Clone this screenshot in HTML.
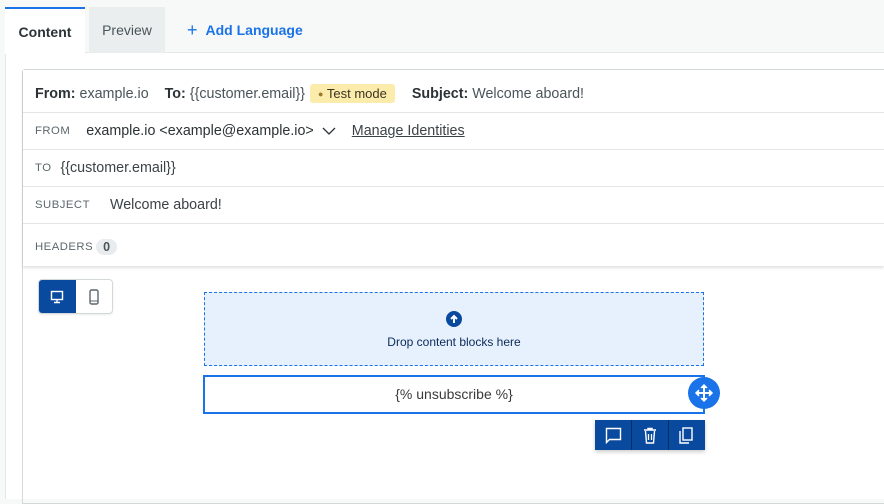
<!DOCTYPE html>
<html><head><meta charset="utf-8"><style>
*{box-sizing:border-box;margin:0;padding:0}
body{width:884px;height:494px;overflow:hidden;background:#f7f8f8;font-family:"Liberation Sans",sans-serif;color:#2b3336;position:relative;font-size:14.3px}
.abs{position:absolute}
.tab{position:absolute;top:7px;height:46px;line-height:46px;text-align:center;font-size:14px}
.row{position:absolute;left:23px;right:0;border-bottom:1px solid #e3e7e8;display:flex;align-items:center}
.lbl{font-size:11.3px;color:#5c676b;letter-spacing:.5px}
</style></head><body>
<div class="abs" style="left:5px;top:52px;right:0;bottom:-5px;background:#fff;border-left:1px solid #e3e8e9;border-top:1px solid #e3e7e8"></div>
<div class="tab" style="left:5px;width:80px;background:#fff;border-top:2px solid #1a73e8;color:#2b3336;font-weight:600;height:47px">Content</div>
<div class="tab" style="left:89px;width:76px;background:#ebeeef;color:#4a5559">Preview</div>
<div class="abs" style="left:187px;top:19px;font-size:14px;color:#1a73e8;font-weight:600"><span style="font-weight:300;font-size:18px;position:relative;top:1px;margin-right:8px">+</span>Add Language</div>
<div class="abs" style="left:22px;top:69px;right:-2px;bottom:-10px;border:1px solid #d3d9db;border-radius:3px 0 0 0"></div>
<div class="abs" style="left:23px;top:70px;right:0;height:196px;background:#fff;box-shadow:0 2px 3px rgba(0,0,0,.12)"></div>
<div class="row" style="top:70px;height:43px;padding-left:12px;padding-top:5px"><b>From:</b>&nbsp;<span style="color:#4a5559">example.io</span><b style="margin-left:16px">To:</b>&nbsp;<span style="color:#4a5559">{{customer.email}}</span><span style="margin-left:5px;background:#fcecac;border-radius:3px;padding:2px 8px;font-size:13px;color:#3a3320"><span style="color:#9a7a2a;font-size:9px;position:relative;top:-1px">●</span> Test mode</span><b style="margin-left:17px">Subject:</b>&nbsp;<span style="color:#4a5559">Welcome aboard!</span></div>
<div class="row" style="top:113px;height:37px;padding-left:12px"><span class="lbl">FROM</span><span style="margin-left:16px">example.io &lt;example@example.io&gt;</span><svg width="14" height="10" style="margin-left:8px" viewBox="0 0 14 10"><path d="M1 2l6 6 6-6" stroke="#2b3336" stroke-width="1.3" fill="none"/></svg><span style="margin-left:16px;text-decoration:underline;color:#3a4346">Manage Identities</span></div>
<div class="row" style="top:150px;height:37px;padding-left:12px"><span class="lbl">TO</span><span style="margin-left:9px;color:#3a4346">{{customer.email}}</span></div>
<div class="row" style="top:187px;height:37px;padding-left:12px"><span class="lbl">SUBJECT</span><span style="margin-left:20px;color:#3a4346">Welcome aboard!</span></div>
<div class="row" style="top:224px;height:42px;padding-left:12px;padding-top:4px;border:none"><span class="lbl">HEADERS</span><span style="margin-left:3px;background:#e8ecee;border-radius:9px;padding:1px 7px;font-size:12.5px;font-weight:600;color:#4a5559">0</span></div>
<div class="abs" style="left:38px;top:279px;width:75px;height:35px;border:1px solid #d3d9db;border-radius:4px;background:#fff;overflow:hidden;box-shadow:0 1px 2px rgba(0,0,0,.08)">
<div class="abs" style="left:-1px;top:-1px;width:38px;height:35px;background:#0a4a9e"></div>
<svg class="abs" style="left:11px;top:10px" width="14" height="14" viewBox="0 0 14 14"><rect x="1.5" y="1.5" width="11" height="8" fill="none" stroke="#fff" stroke-width="1.4"/><path d="M7 10v2M4 12.5h6" stroke="#fff" stroke-width="1.4"/></svg>
<svg class="abs" style="left:50px;top:9px" width="10" height="16" viewBox="0 0 10 16"><rect x="1" y="1" width="8" height="14" rx="1.5" fill="none" stroke="#5c676b" stroke-width="1.4"/><path d="M1 12h8" stroke="#5c676b"/></svg>
</div>
<div class="abs" style="left:204px;top:292px;width:500px;height:74px;background:#e6f1fd;border:1px dashed #1a73e8;text-align:center">
<svg style="margin-top:18px" width="16" height="16" viewBox="0 0 16 16"><circle cx="8" cy="8" r="8" fill="#0a4a9e"/><path d="M8 12V5M5 8l3-3 3 3" stroke="#fff" stroke-width="2" fill="none"/></svg>
<div style="font-size:12px;color:#0b2a5a;margin-top:4px">Drop content blocks here</div></div>
<div class="abs" style="left:203px;top:375px;width:502px;height:39px;border:2px solid #1a73e8;background:#fff;text-align:center;line-height:35px;font-size:14px;color:#3a3a3a">{% unsubscribe %}</div>
<div class="abs" style="left:688px;top:377px;width:32px;height:32px;border-radius:50%;background:#1a73e8"></div>
<svg class="abs" style="left:693px;top:382px" width="22" height="22" viewBox="0 0 22 22"><path d="M11 3v16M3 11h16" stroke="#fff" stroke-width="2"/><path d="M8 6l3-3 3 3M8 16l3 3 3-3M6 8l-3 3 3 3M16 8l3 3-3 3" fill="#fff" stroke="#fff" stroke-width="1.5"/></svg>
<div class="abs" style="left:595px;top:420px;width:110px;height:30px;background:#0a4a9e;box-shadow:0 2px 4px rgba(0,0,0,.2)">
<div class="abs" style="left:36px;top:0;width:1px;height:30px;background:#062f66"></div>
<div class="abs" style="left:73px;top:0;width:1px;height:30px;background:#062f66"></div>
<svg class="abs" style="left:10px;top:7px" width="17" height="17" viewBox="0 0 17 17"><path d="M1.5 1.5h14v11h-11l-3 3z" fill="none" stroke="#fff" stroke-width="1.4"/></svg>
<svg class="abs" style="left:47px;top:7px" width="16" height="17" viewBox="0 0 16 17"><path d="M2 3h12M6 3V1.5h4V3M3.5 4l1 12h7l1-12" fill="none" stroke="#fff" stroke-width="1.4"/><path d="M6.5 7v6M9.5 7v6" stroke="#fff" stroke-width="1.3"/></svg>
<svg class="abs" style="left:83px;top:7px" width="16" height="17" viewBox="0 0 16 17"><rect x="5" y="1" width="9" height="12" fill="none" stroke="#fff" stroke-width="1.4"/><path d="M2 4v12h9" fill="none" stroke="#fff" stroke-width="1.4"/></svg>
</div>
</body></html>
